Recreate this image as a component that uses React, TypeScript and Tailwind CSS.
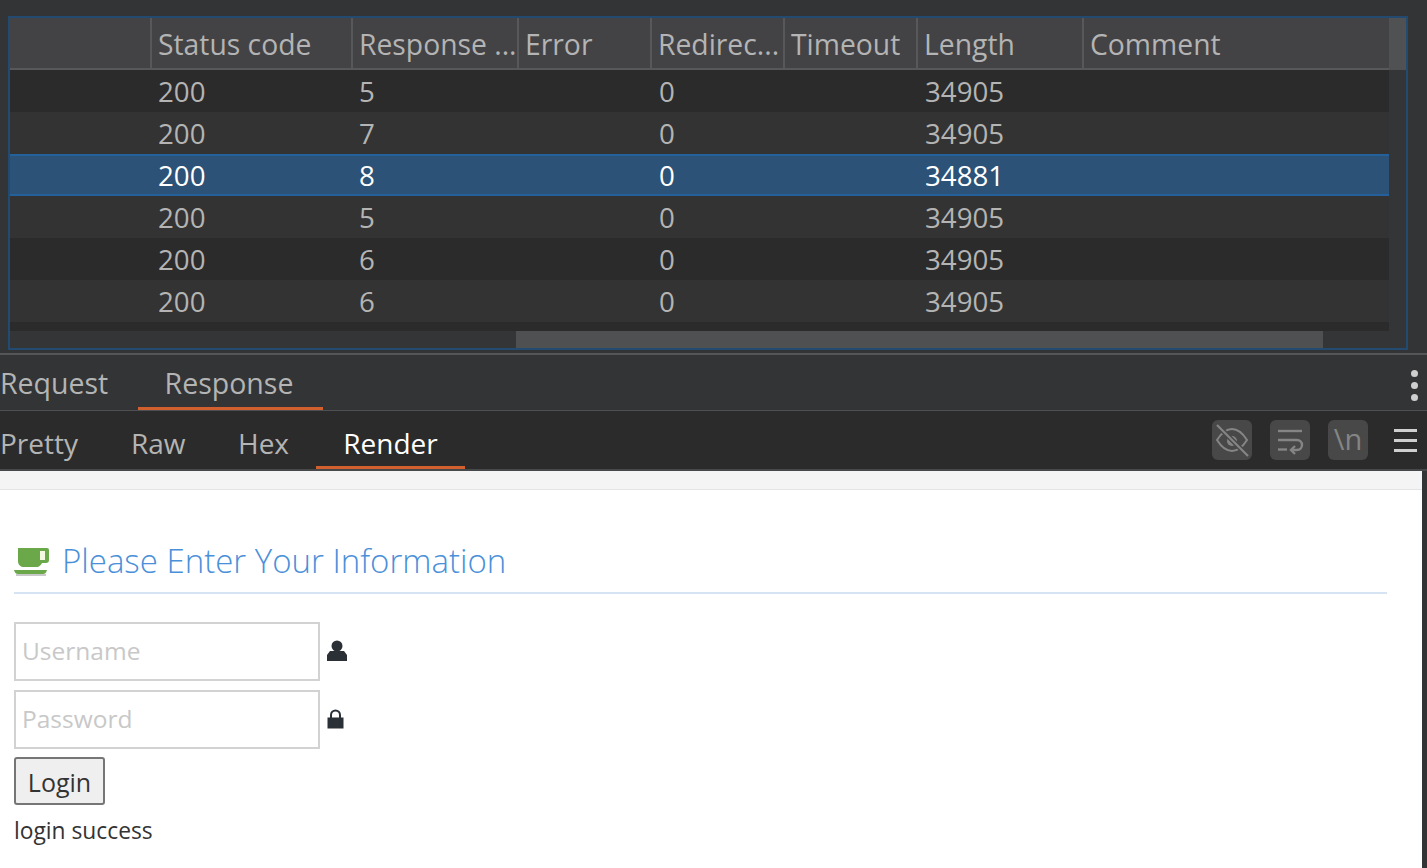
const font = "font-['Open_Sans','Noto_Sans',sans-serif]";

const columns = [
  { label: "", width: "w-[140px]" },
  { label: "Status code", width: "w-[201px]" },
  { label: "Response ...", width: "w-[166px]" },
  { label: "Error", width: "w-[133px]" },
  { label: "Redirec...", width: "w-[133px]" },
  { label: "Timeout", width: "w-[133px]" },
  { label: "Length", width: "w-[166px]" },
  { label: "Comment", width: "flex-1" },
];

const rows = [
  { time: "5", length: "34905" },
  { time: "7", length: "34905" },
  { time: "8", length: "34881", selected: true },
  { time: "5", length: "34905" },
  { time: "6", length: "34905" },
  { time: "6", length: "34905" },
];

function ResultsTable() {
  return (
    <div className="mx-2 mt-4 h-[334px] w-[1400px] border-2 border-[#234a70] flex">
      <div className="w-[1379px] flex flex-col">
        <div className="flex h-[52px] bg-[#434345] border-b-2 border-[#57585a]">
          {columns.map((c, i) => (
            <div
              key={i}
              className={`${c.width} h-full px-[6px] pt-[2px] flex items-center text-[#b4b4b4] text-[28.3px] leading-none whitespace-nowrap overflow-hidden ${i > 0 ? "border-l-2 border-[#57585a]" : ""}`}
            >
              {c.label}
            </div>
          ))}
        </div>
        {rows.map((r, i) => (
          <div
            key={i}
            className={`flex h-[42px] pt-[2px] items-center text-[27.7px] leading-none ${
              r.selected
                ? "bg-[#2c5277] text-white border-y-2 border-[#24619a]"
                : i % 2 === 0
                  ? "bg-[#2b2b2b] text-[#b4b4b4]"
                  : "bg-[#333333] text-[#b4b4b4]"
            }`}
          >
            <div className="w-[140px]" />
            <div className="w-[201px] pl-2">200</div>
            <div className="w-[167px] pl-2">{r.time}</div>
            <div className="w-[133px]" />
            <div className="w-[133px] pl-2">0</div>
            <div className="w-[133px]" />
            <div className="w-[166px] pl-2">{r.length}</div>
          </div>
        ))}
        <div className="h-[9px] bg-[#2b2b2b]" />
        <div className="h-[17px] bg-[#333537] pl-[506px]">
          <div className="h-full w-[807px] bg-[#4e5052]" />
        </div>
      </div>
      <div className="flex-1 flex flex-col bg-[#333537]">
        <div className="h-[52px] bg-[#505153]" />
      </div>
    </div>
  );
}

function ResponseTabs() {
  return (
    <div className="mt-[3px] h-[58px] border-t-2 border-b border-t-[#555658] border-b-[#4f5052] flex justify-between">
      <div className="flex text-[28.5px] text-[#b4b4b4]">
        <div className="w-[138px] pt-[2px] h-[55px] flex items-center">Request</div>
        <div className="w-[185px] h-[55px] pt-1 pr-[3px] flex items-center justify-center border-b-[3px] border-[#d2602e]">
          Response
        </div>
      </div>
      <div className="flex flex-col gap-[5px] mr-[9px] mt-[15px]">
        <span className="size-[7px] rounded-full bg-[#cfcfcf]" />
        <span className="size-[7px] rounded-full bg-[#cfcfcf]" />
        <span className="size-[7px] rounded-full bg-[#cfcfcf]" />
      </div>
    </div>
  );
}

function HideIcon() {
  return (
    <svg width="40" height="40" viewBox="0 0 40 40" fill="none" stroke="#858585" strokeWidth="2">
      <path d="M5 20C10 12 15 9 20 9s10 3 15 11c-5 8-10 11-15 11S10 28 5 20Z" />
      <circle cx="20" cy="21" r="5" fill="#858585" stroke="none" />
      <path d="M5 5l31 31" stroke="#484848" strokeWidth="5" />
      <path d="M5 5l31 31" strokeWidth="2.200" />
    </svg>
  );
}

function WrapIcon() {
  return (
    <svg width="40" height="40" viewBox="0 0 40 40" fill="none" stroke="#858585" strokeWidth="2.400">
      <path d="M8 11h24" />
      <path d="M8 20h19a5 5 0 0 1 0 10h-6" />
      <path d="M25 26l-4 4 4 4" />
      <path d="M8 29.500h9" />
    </svg>
  );
}

function ViewTabs() {
  return (
    <div className="h-[60px] bg-[#2b2b2b] border-b-[2px] border-[#47484a] flex justify-between items-stretch">
      <div className="flex text-[28px] text-[#b4b4b4]">
        <div className="w-[131px] pt-[5px] flex items-center">Pretty</div>
        <div className="w-[107px] pt-[5px] flex items-center">Raw</div>
        <div className="w-[78px] pt-[5px] flex items-center">Hex</div>
        <div className="w-[149px] pt-[9px] flex items-center justify-center text-white border-b-[3px] border-[#d2602e]">
          Render
        </div>
      </div>
      <div className="flex items-center gap-[18px] pr-[10px] text-[#858585]">
        <div className="size-10 rounded-md bg-[#484848]">
          <HideIcon />
        </div>
        <div className="size-10 rounded-md bg-[#484848]">
          <WrapIcon />
        </div>
        <div className="size-10 rounded-md bg-[#484848] flex items-center justify-center text-[29px] leading-none pb-[3px]">
          \n
        </div>
        <div className="ml-2 flex flex-col gap-[7px]">
          <span className="block w-[23px] h-[3px] bg-[#cfcfcf]" />
          <span className="block w-[23px] h-[3px] bg-[#cfcfcf]" />
          <span className="block w-[23px] h-[3px] bg-[#cfcfcf]" />
        </div>
      </div>
    </div>
  );
}

function CoffeeIcon() {
  return (
    <svg width="36" height="29" viewBox="0 0 36 29" className="shrink-0 mt-[11px]">
      <path d="M4 0h29a2 2 0 0 1 2 2v10a3 3 0 0 1-3 3h-4c-1 2-3 4-5 4H10c-3 0-6-2-6-6z" fill="#6aa84a" />
      <path d="M26 3h5v9h-5z" fill="#f4f8e0" />
      <path d="M0 22h33c-1 3-2 4-4 4H4c-2 0-3-1-4-4z" fill="#6aa84a" />
      <path d="M2 26h30v2H2z" fill="#c9c9c9" />
    </svg>
  );
}

function RenderedPage() {
  return (
    <div className="w-[1422px] h-[397px] bg-white">
      <div className="h-[19px] bg-[#f4f4f4] border-b border-[#e4e4e4]" />
      <div className="pl-[14px] pr-[35px]">
        <div className="mt-[47px] h-[57px] border-b-2 border-[#d5e3f2] flex items-start gap-[12px]">
          <CoffeeIcon />
          <h1 className="text-[33px] leading-[44px] mt-[2px] font-light text-[#4a90d9] font-['Open_Sans',sans-serif]">
            Please Enter Your Information
          </h1>
        </div>
        <div className="mt-[28px] flex items-center gap-[7px]">
          <input
            placeholder="Username"
            className="w-[306px] h-[59px] border-2 border-[#d2d2d2] px-[6px] pb-[3px] text-[24.5px] placeholder:text-[#c8c8c8] outline-none"
          />
          <svg width="20" height="22" viewBox="0 0 20 22" className="text-[#2b2f36] mb-[2px]">
            <circle cx="10" cy="6" r="5.500" fill="currentColor" />
            <path d="M3 11h14l3 4v6H0v-6z" fill="currentColor" />
          </svg>
        </div>
        <div className="mt-[9px] flex items-center gap-[7px]">
          <input
            placeholder="Password"
            className="w-[306px] h-[59px] border-2 border-[#d2d2d2] px-[6px] pb-[3px] text-[24.5px] placeholder:text-[#c8c8c8] outline-none"
          />
          <svg width="17" height="20" viewBox="0 0 17 20" className="text-[#2b2f36] mb-[2px]">
            <path d="M4 9V6a4.500 4.500 0 0 1 9 0v3" fill="none" stroke="currentColor" strokeWidth="2" />
            <rect x="0.500" y="8.500" width="16" height="11" fill="currentColor" />
          </svg>
        </div>
        <button className="mt-[8px] block w-[91px] h-[48px] pt-[3px] border-2 border-[#767676] rounded-[3px] bg-[#efefef] text-[25px] text-[#333]">
          Login
        </button>
        <div className="mt-[11px] text-[22.800px] leading-[30px] text-[#333]">login success</div>
      </div>
    </div>
  );
}

export default function App() {
  return (
    <div className={`w-[1427px] h-[868px] overflow-hidden bg-[#323436] ${font}`}>
      <ResultsTable />
      <ResponseTabs />
      <ViewTabs />
      <RenderedPage />
    </div>
  );
}
